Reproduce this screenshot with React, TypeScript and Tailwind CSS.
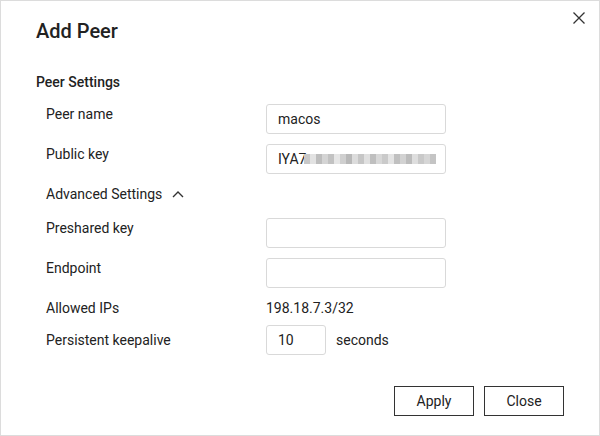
import React from "react";

const blur = [
  "#c8c8c8", "#e2e2e2", "#bdbdbd", "#d4d4d4", "#c2c2c2", "#e6e6e6", "#cfcfcf", "#b8b8b8",
  "#dcdcdc", "#c6c6c6", "#e0e0e0", "#bfbfbf", "#d8d8d8", "#cacaca", "#e4e4e4", "#c0c0c0",
  "#d2d2d2", "#bcbcbc", "#dedede", "#c9c9c9", "#d6d6d6", "#c4c4c4",
];

function Row({ label, children, className = "", lift = true }: { label: string; children: React.ReactNode; className?: string; lift?: boolean }) {
  return (
    <div className={`flex items-center pl-[10px] ${className}`}>
      <div className={`w-[220px] shrink-0 ${lift ? "-mt-[10px]" : ""}`}>{label}</div>
      {children}
    </div>
  );
}

function Field({ value = "", w = "w-[180px]", children }: { value?: string; w?: string; children?: React.ReactNode }) {
  return (
    <div className={`${w} h-[30px] flex items-center border border-[#d9d9d9] rounded-[3px] px-[11px] overflow-hidden`}>
      {value}
      {children}
    </div>
  );
}

export default function App() {
  return (
    <div
      className="relative w-[600px] h-[436px] bg-white border border-[#dcdcdc] text-[14px] text-[#222] pl-[35px] pr-[35px]"
      style={{ fontFamily: "Roboto, 'Liberation Sans', sans-serif" }}
    >
      <button className="absolute right-[13px] top-[10px] w-[14px] h-[14px]">
        <svg viewBox="0 0 14 14" width="14" height="14" stroke="#333" strokeWidth="1.3" fill="none">
          <path d="M1.5 1.5 L12.5 12.5 M12.5 1.5 L1.5 12.5" />
        </svg>
      </button>
      <div className="h-[59px] flex items-center text-[20px] font-medium">Add Peer</div>
      <div className="mt-[12px] h-[20px] flex items-center font-medium">Peer Settings</div>
      <Row label="Peer name" className="mt-[12px]">
        <Field value="macos" />
      </Row>
      <Row label="Public key" className="mt-[10px]">
        <Field>
          <span>IYA7</span>
          <span className="flex h-[10px] ml-[-2px]">
            {blur.map((c, i) => (
              <span key={i} className="w-[6px] h-[10px]" style={{ background: c }} />
            ))}
          </span>
        </Field>
      </Row>
      <div className="mt-[10px] h-[20px] pl-[10px] flex items-center gap-[10px]">
        <span>Advanced Settings</span>
        <svg viewBox="0 0 12 8" width="12" height="8" stroke="#333" strokeWidth="1.4" fill="none">
          <path d="M1 7 L6 2 L11 7" />
        </svg>
      </div>
      <Row label="Preshared key" className="mt-[14px]">
        <Field />
      </Row>
      <Row label="Endpoint" className="mt-[10px]">
        <Field />
      </Row>
      <Row label="Allowed IPs" className="mt-[10px] h-[20px]" lift={false}>
        <span>198.18.7.3/32</span>
      </Row>
      <Row label="Persistent keepalive" className="mt-[7px]" lift={false}>
        <Field value="10" w="w-[60px]" />
        <span className="ml-[10px]">seconds</span>
      </Row>
      <div className="mt-[31px] flex justify-end gap-[10px]">
        <button className="w-[80px] h-[30px] border border-[#333] bg-white">Apply</button>
        <button className="w-[80px] h-[30px] border border-[#333] bg-white">Close</button>
      </div>
    </div>
  );
}
